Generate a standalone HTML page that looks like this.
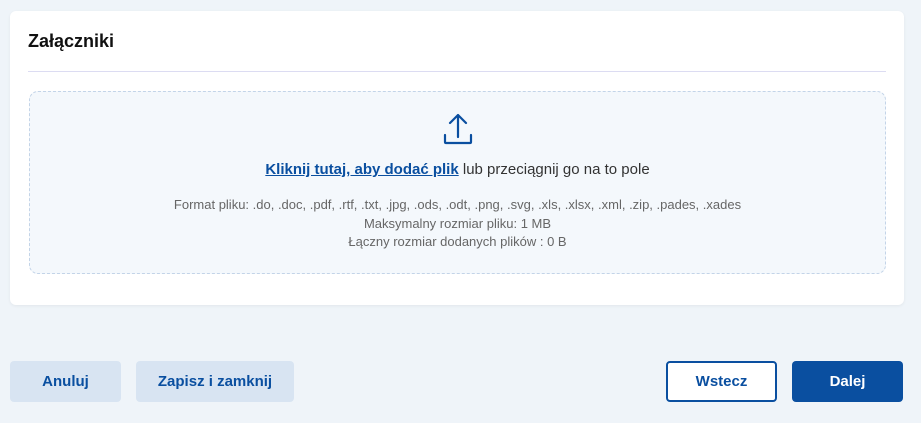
<!DOCTYPE html>
<html><head><meta charset="utf-8"><style>
body{margin:0;width:921px;height:423px;background:#eff4f9;font-family:"Liberation Sans",sans-serif;position:relative;overflow:hidden}
.card{position:absolute;left:10px;top:11px;width:894px;height:294px;background:#fff;border-radius:6px;box-shadow:0 1px 3px rgba(0,0,0,.06)}
h1{position:absolute;left:18px;top:20px;margin:0;font-size:18px;font-weight:bold;color:#111}
.line{position:absolute;left:18px;top:60px;width:858px;height:1px;background:#dcdcf2}
.drop{position:absolute;left:19px;top:80px;width:855px;height:181px;border:1px dashed #c3d4e8;border-radius:9px;background:#f4f8fc;text-align:center}
.main{position:absolute;top:69px;left:0;right:0;font-size:15px;color:#333}
.main a{color:#0a4fa0;font-weight:bold;text-decoration:underline}
.info{position:absolute;top:104px;left:0;right:0;font-size:13px;color:#666;line-height:18.5px}
.btn{position:absolute;top:361px;height:41px;border-radius:4px;font-size:15px;font-weight:bold;display:flex;align-items:center;justify-content:center;box-sizing:border-box}
.l{background:#d8e4f2;color:#0a4fa0}
</style></head><body>
<div class="card">
<h1>Załączniki</h1>
<div class="line"></div>
<div class="drop">
<svg style="position:absolute;left:413px;top:21px" width="30" height="32" viewBox="0 0 30 32" fill="none" stroke="#0a4fa0" stroke-width="2.2" stroke-linecap="round" stroke-linejoin="round"><path d="M15 2V24M7 10L15 2L23 10M2 22V29Q2 30 3 30H27Q28 30 28 29V22"/></svg>
<div class="main"><a>Kliknij tutaj, aby dodać plik</a> lub przeciągnij go na to pole</div>
<div class="info">Format pliku: .do, .doc, .pdf, .rtf, .txt, .jpg, .ods, .odt, .png, .svg, .xls, .xlsx, .xml, .zip, .pades, .xades<br>Maksymalny rozmiar pliku: 1 MB<br>Łączny rozmiar dodanych plików : 0 B</div>
</div>
</div>
<div class="btn l" style="left:10px;width:111px">Anuluj</div>
<div class="btn l" style="left:136px;width:158px">Zapisz i zamknij</div>
<div class="btn" style="left:666px;width:111px;border:2px solid #0a4fa0;background:#fff;color:#0a4fa0">Wstecz</div>
<div class="btn" style="left:792px;width:111px;background:#0a4fa0;color:#fff">Dalej</div>
</body></html>
